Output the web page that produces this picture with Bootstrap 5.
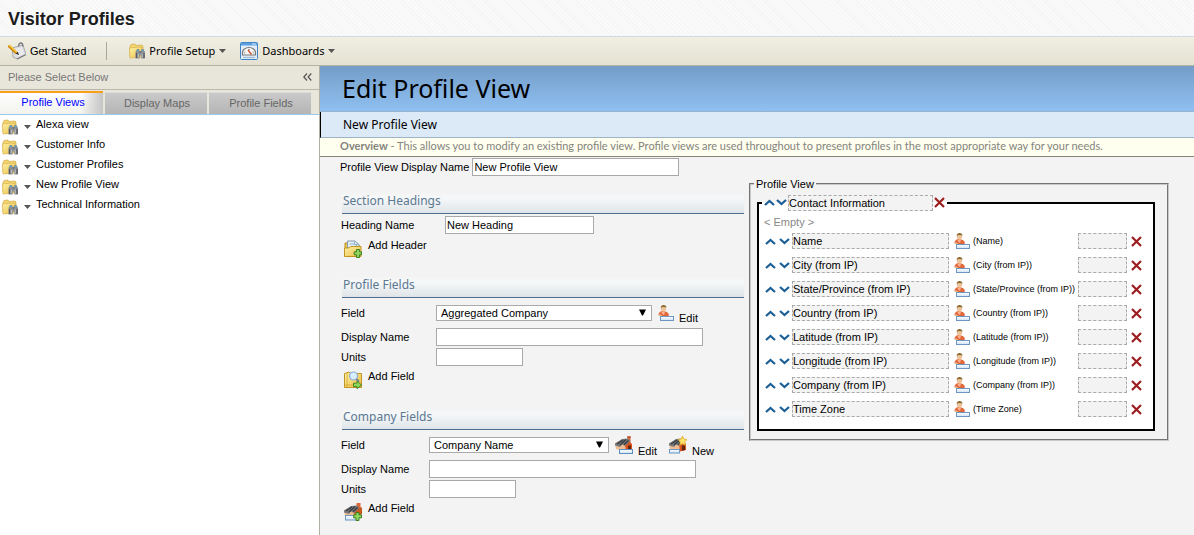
<!DOCTYPE html>
<html lang="en">
<head>
<meta charset="utf-8">
<meta name="viewport" content="width=device-width, initial-scale=1">
<title>Visitor Profiles</title>
<link rel="stylesheet" href="https://cdn.jsdelivr.net/npm/bootstrap@5.3.0/dist/css/bootstrap.min.css">
<style>
  :root { --ui: "Liberation Sans", Arial, sans-serif; --human: "Noto Sans", Tahoma, sans-serif; }
  body { font-family: var(--ui); font-size: 11px; line-height: 18px; color: #000; background: #fff; }
  svg { flex: none; display: block; }
  button { border: 0; background: none; padding: 0; color: inherit; font: inherit; }
  .hd { height: 37px; padding: 2px 8px 0; border-bottom: 1px solid #ccdbe8;
        background: repeating-linear-gradient(45deg, #f5f5f5 0 1px, #fafafa 1px 3px); }
  .hd h1 { font-size: 18px; line-height: 35px; font-weight: bold; color: #1c1c1c; margin: 0; }
  .tools { height: 29px; padding: 0 8px; border-bottom: 1px solid #b5b4a2; background: linear-gradient(#f1efe2, #e4e1d2); }
  .tools .rule { width: 1px; height: 18px; background: #aaa898; margin: 0 22px 0 20px; }
  .tools .tah { font-family: var(--human); padding-bottom: 1px; }
  .tools .tah + .tah { margin-left: 14px; }
  .side { width: 320px; border-right: 1px solid #b0afa1; background: #fff; }
  .side-top { height: 24px; padding: 0 7px 2px 8px; color: #777; background: #e8e6da; border-bottom: 1px solid #b9b7a8; }
  .tabs { height: 25px; gap: 2px; padding: 1px 0 0; background: #e8e6da; border-bottom: 1px solid #9cc8ec; }
  .tabs button { width: 102px; height: 22px; margin-top: 1px; padding: 0 0 2px 2px; color: #666; background: linear-gradient(#c9c9c9, #b5b5b5); border-top: 1px solid #dcdcdc; }
  .tabs button.on { width: 103px; height: 23px; margin: 0; padding: 0 0 4px 3px; color: #00f; border-top: 2px solid #f9a01b;
        background: linear-gradient(90deg, rgba(255,255,255,0) 78%, #c4c4c4), linear-gradient(#fff, #f2f2ee); }
  .views li { height: 20px; gap: 6px; padding-left: 2px; }
  .views li svg.fold { margin-top: 4px; }
  .views li svg.car { margin-top: 10px; }
  .views a { color: #000; text-decoration: none; margin-left: -1px; }
  .work { background: #f3f3f3; min-height: calc(100vh - 66px); }
  .banner { height: 46px; padding-left: 22px; background: linear-gradient(#749dc8, #8fc0f1); border-bottom: 1px solid #98b4d2; }
  .banner h2 { font: 25px/45px var(--human); margin: 0; color: #000; }
  .crumb { height: 26px; padding-left: 22px; font: 12px/25px var(--human); background: #dceaf8; border-left: 1px solid #000; border-bottom: 1px solid #9db3c8; }
  .note { height: 19px; padding-left: 20px; font-family: Lato, Arial, sans-serif; line-height: 15px; color: #84847c; background: #fffff0; border-bottom: 1px solid #86867c; }
  .inp, .pick { border: 1px solid #a9a9a9; background: #fff; height: 18px; padding: 0 2px 0 1px; color: #000; font: 11px/16px var(--ui); border-radius: 0; }
  .pick { appearance: none; height: 16px; padding: 0 4px; line-height: 14px;
        background: #fff url("data:image/svg+xml,%3Csvg xmlns='http://www.w3.org/2000/svg' width='7' height='7'%3E%3Cpath d='M0 .5h7L4 6.500H3z'/%3E%3C/svg%3E") no-repeat right 5px top 3px; }
  .display { padding: 1px 0 0 20px; gap: 3px; height: 35px; }
  .panes { display: grid; grid-template-columns: 404px 420px; column-gap: 5px; padding-left: 20px; align-items: start; }
  .sect h3 { height: 22px; margin: 0 0 0 2px; padding-left: 1px; font: 12px/18px var(--human); color: #5b7891;
        border-bottom: 1px solid #4d6f8f; background: linear-gradient(#f3f3f3, #f6f8f9 30%, #dfe4e8); }
  .frow { height: 20px; padding-left: 1px; }
  .frow.first { height: 22px; }
  .frow.tall { height: 29px; }
  .frow > label { width: var(--lab); flex: none; }
  .act { height: 22px; padding: 2px 0 0 4px; gap: 6px; align-items: flex-start; display: flex; }
  .act span { line-height: 14px; }
  .act svg { margin-top: 2px; }
  .s-head { --lab: 104px; min-height: 84px; }
  .s-prof { --lab: 95px; min-height: 132px; }
  .s-comp { --lab: 88px; }
  .icbtn { display: flex; align-items: flex-end; gap: 5px; margin-left: 6px; }
  .icbtn + .icbtn { margin-left: 12px; }
  .icbtn span { line-height: 14px; margin-bottom: -4px; }
  fieldset.outer { border: 2px groove #c8c8c8; padding: 0 12px 8px 6px; margin-top: -15px; }
  legend { float: none; width: auto; margin: 0; font-size: 11px; line-height: 14px; padding: 0 2px; }
  fieldset.outer > legend { margin-left: -3px; }
  fieldset.inner { border: 2px solid #000; background: #fff; padding: 0 5px 8px 6px; margin-top: 3px; }
  fieldset.inner > legend { display: flex; align-items: center; gap: 1px; padding: 0 2px; margin-left: -3px; height: 18px; }
  fieldset.inner > legend > button { margin-bottom: 2px; }
  .dash { border: 1px dashed #aaa; background: #f3f3f3; height: 16px; padding: 0; font: 11px/14px var(--ui); color: #000; border-radius: 0; }
  .empty { color: #888; line-height: 14px; margin: 3px 0 0 -1px; }
  .line { height: 24px; }
  .line button + button { margin-left: 3px; }
  .line button + .dash { margin-left: 2px; }
  .line .src { width: 108px; padding-left: 3px; font-size: 9px; white-space: nowrap; }
  .line svg.who { margin-left: 5px; }
  .w87 { width: 87px; } .w149 { width: 149px; } .w207 { width: 207px; } .w267 { width: 267px; }
  .w216 { width: 216px; } .w180 { width: 180px; } .w145 { width: 145px; } .w157 { width: 157px; } .w49 { width: 49px; }
</style>
</head>
<body>
<svg width="0" height="0" class="position-absolute" aria-hidden="true">
  <defs>
    <linearGradient id="gold" x1="0" y1="0" x2="1" y2="1"><stop offset="0" stop-color="#fff3a8"/><stop offset="1" stop-color="#e8bc40"/></linearGradient>
    <linearGradient id="sky" x1="0" y1="0" x2="0" y2="1"><stop offset="0" stop-color="#fff"/><stop offset="1" stop-color="#cfe2f5"/></linearGradient>
    <symbol id="folder" viewBox="0 0 16 16">
      <path d="M1 3.500 2 1.500 6 1l1 1.500 6-.5 1 1v10H1z" fill="#f2d56e" stroke="#d3ab45" stroke-width=".7"/>
      <path d="M.5 5 9 4l4.500.5L12 14 1 15z" fill="url(#gold)" stroke="#d8b04c" stroke-width=".7"/>
      <path d="M6.500 9 8 6h2l.7 2h1L12.500 6h2L16 9v6.500h-3.800v-3h-1.500v3H6.500z" fill="#8b8e92"/>
      <path d="M8 7.500h1.500M13 7.500h1.500" stroke="#43b0dc" stroke-width="1.200"/>
      <path d="M7.500 10v5M15 10v5M10.700 9h1.300" stroke="#55585c" stroke-width="1.200"/>
      <path d="M9.300 10.500v4M13.200 10.500v4" stroke="#c9ccd0" stroke-width=".8"/>
    </symbol>
    <symbol id="start" viewBox="0 0 18 18">
      <path d="M4 6 15 3l3 9.500L9.500 17 5 15z" fill="#dcdde0" stroke="#9a9ca1" stroke-width=".8"/>
      <path d="M6 7l8-2 2.500 7-7 3z" fill="#e9e9ed"/>
      <path d="M9 17l8.500-4.300" stroke="#777" stroke-width="1.200"/>
      <path d="M10.500 4.500 11 2q2-2 3.500 0l.5 2.500" fill="none" stroke="#77797e" stroke-width="1.300"/>
      <path d="M.5 3.500 8.500 11" stroke="#c98408" stroke-width="3"/>
      <path d="M1 3 9 10.500" stroke="#ffd24a" stroke-width="1.100"/>
      <path d="M7.700 11.800 9.800 9.800 11 13z" fill="#222"/>
    </symbol>
    <symbol id="dash" viewBox="0 0 18 18">
      <rect x=".5" y=".5" width="17" height="17" rx="1" fill="#e4eef9" stroke="#3f85c8"/>
      <path d="M1 1h16v2.500H1z" fill="#5a9fe0"/><path d="M12 2h4" stroke="#d8eaff"/>
      <path d="M2.500 13V10.500a6.500 5 0 0 1 13 0V13z" fill="#f7f7f5" stroke="#777" stroke-width="1.200"/>
      <path d="M4.500 11.500l.5-2M8 7.500h2M13 9.500l.5 2" stroke="#999" stroke-width=".9"/>
      <path d="M8 8l3.500 4.500" stroke="#d24e2e" stroke-width="1.300"/>
      <path d="M3 15.500h12" stroke="#a6bed8" stroke-width="1.400"/>
    </symbol>
    <symbol id="caret" viewBox="0 0 7 4"><path d="M0 0h7L3.500 4z" fill="#555"/></symbol>
    <symbol id="up" viewBox="0 0 11 7"><path d="M1 6 5.500 2 10 6" fill="none" stroke="#1d5f97" stroke-width="2.300"/></symbol>
    <symbol id="down" viewBox="0 0 11 7"><path d="M1 1 5.500 5 10 1" fill="none" stroke="#1d5f97" stroke-width="2.300"/></symbol>
    <symbol id="cross" viewBox="0 0 11 11"><path d="M1 1l9 9M10 1l-9 9" fill="none" stroke="#9c1f1f" stroke-width="2.200"/></symbol>
    <symbol id="person" viewBox="0 0 16 16">
      <path d="M.5 9.500Q1 6 5 6l4 1 2 2.500-.5 1.500H2z" fill="#e2673a"/>
      <path d="M3 7.500 6 10l1-3.500z" fill="#ffb897"/><path d="M0 9.500l4 1.500" stroke="#e9b48c" stroke-width="1.400"/>
      <ellipse cx="5.500" cy="3.700" rx="2.600" ry="3" fill="#ecc39a"/>
      <path d="M2.700 3.500Q2.500 0 5.500 0t2.900 3L7.500 2.200 4 2z" fill="#8c6b32"/>
      <rect x="2.500" y="11.500" width="13" height="4" fill="url(#sky)" stroke="#6d97c3"/>
    </symbol>
    <g id="house">
      <path d="M0 7 8 4l3 3v6l-3 2-7-2z" fill="#f0bd93"/>
      <path d="M10 8.500 14 5l3 3v6l-6 1.500z" fill="#d9531e"/>
      <path d="M13 9.500h3V14l-3 .7z" fill="#632510"/>
      <path d="M0 9.500V7.500L7 3l6-.5 2.500 2.500L10 10 7 8.500 5 11z" fill="#777a7d"/>
      <path d="M2 8l6-4M5 9l6-5.500M9 8.500l4.500-4" stroke="#35383b" stroke-width="1.200"/>
    </g>
    <symbol id="comp" viewBox="0 0 18 18">
      <path d="M12.500.5h3v6h-3z" fill="#dd6736"/><path d="M12 1h4" stroke="#a53c18"/><use href="#house"/>
      <rect x="4.500" y="13.500" width="13" height="4" fill="url(#sky)" stroke="#5d8ec0"/>
    </symbol>
    <symbol id="compnew" viewBox="0 0 18 18">
      <use href="#house"/>
      <path d="M13.500 0l1.400 3 3.100.5-2.200 2.400.5 3.300-2.800-1.500-2.800 1.500.5-3.300L9 3.500l3.100-.5z" fill="#ffe268" stroke="#d6a42a" stroke-width=".7"/>
      <rect x=".5" y="13.500" width="10" height="3.500" fill="url(#sky)" stroke="#6d97c3"/>
    </symbol>
    <symbol id="addhead" viewBox="0 0 18 18">
      <path d="M1 3h4l1 2h9v11.500H1z" fill="#eecb57" stroke="#b68a1e"/>
      <path d="M3.500 8V1h7.500l4 3.500V8z" fill="#e4eef7" stroke="#8198aa"/>
      <path d="M5.500 4h5l3 2.500M10.500 1.500v3h4" stroke="#8db2cf" fill="none"/>
      <path d="M.5 8h4.500l1.500-1.500h10.500v10H.5z" fill="url(#gold)" stroke="#c29421"/>
      <path d="M12.500 9.500h3v2.300h2v3h-2v2.700h-3v-2.700h-2.300v-3h2.300z" fill="#8ed75c" stroke="#3c7e22"/>
    </symbol>
    <symbol id="addprof" viewBox="0 0 18 18">
      <path d="M.5 2.500 5 1l1.500 1.500h11v14H.5z" fill="url(#gold)" stroke="#c29421"/>
      <path d="M1 14h9M3 2v14" stroke="#d5a62d" stroke-width=".8"/>
      <circle cx="9.500" cy="5" r="4" fill="#d9efff" stroke="#8caed0" stroke-width="1.200"/>
      <path d="M12.300 8 15 10.500" stroke="#7b8791" stroke-width="2"/>
      <path d="M9.500 12.200h3.500V10l4.500 4-4.500 3.800v-2.200H9.500z" fill="#8ed75c" stroke="#3c7e22" stroke-width=".9"/>
    </symbol>
    <symbol id="addcomp" viewBox="0 0 18 18">
      <path d="M12.500 0h4v6h-4z" fill="#dd6736"/><use href="#house"/><path d="M12 8l5-4 1 1v6h-6z" fill="#c9581f"/>
      <rect x="1.500" y="12.500" width="11" height="4.500" fill="url(#sky)" stroke="#6d97c3"/>
      <path d="M12 9.500h3v2.300h2.500v3H15v2.700h-3v-2.700H9.700v-3H12z" fill="#8ed75c" stroke="#3c7e22"/>
    </symbol>
  </defs>
</svg>

<header class="hd"><h1>Visitor Profiles</h1></header>

<nav class="tools d-flex align-items-center" aria-label="Main">
  <button class="d-flex align-items-center gap-1"><svg width="18" height="18"><use href="#start"/></svg><span>Get Started</span></button>
  <span class="rule"></span>
  <button class="tah d-flex align-items-center gap-1"><svg width="16" height="16"><use href="#folder"/></svg><span>Profile Setup</span><svg width="7" height="4"><use href="#caret"/></svg></button>
  <button class="tah d-flex align-items-center gap-1"><svg width="18" height="18"><use href="#dash"/></svg><span>Dashboards</span><svg width="7" height="4"><use href="#caret"/></svg></button>
</nav>

<div class="d-flex">
  <aside class="side flex-shrink-0">
    <div class="side-top d-flex align-items-center justify-content-between">
      <span>Please Select Below</span>
      <button aria-label="Collapse"><svg width="9" height="8" viewBox="0 0 9 8"><path d="M4 .5.8 4 4 7.500M8.300.5 5.100 4l3.200 3.500" fill="none" stroke="#555" stroke-width="1.200"/></svg></button>
    </div>
    <div class="tabs d-flex" role="tablist">
      <button class="on" role="tab" aria-selected="true">Profile Views</button>
      <button role="tab" aria-selected="false">Display Maps</button>
      <button role="tab" aria-selected="false">Profile Fields</button>
    </div>
    <ul class="views list-unstyled m-0" id="views"></ul>
  </aside>

  <main class="work flex-grow-1">
    <div class="banner"><h2>Edit Profile View</h2></div>
    <div class="crumb">New Profile View</div>
    <div class="note"><b>Overview</b> - This allows you to modify an existing profile view. Profile views are used throughout to present profiles in the most appropriate way for your needs.</div>
    <div class="display d-flex align-items-start">
      <label for="pv">Profile View Display Name</label><input id="pv" class="inp w207" value="New Profile View">
    </div>
    <div class="panes">
      <div>
        <section class="sect s-head">
          <h3>Section Headings</h3>
          <div class="frow first d-flex align-items-center"><label for="hn">Heading Name</label><input id="hn" class="inp w149" value="New Heading"></div>
          <button class="act"><svg width="18" height="18"><use href="#addhead"/></svg><span>Add Header</span></button>
        </section>
        <section class="sect s-prof">
          <h3>Profile Fields</h3>
          <div class="frow tall d-flex align-items-center"><label for="pf">Field</label><select id="pf" class="pick w216"><option>Aggregated Company</option></select>
            <button class="icbtn"><svg width="16" height="16"><use href="#person"/></svg><span>Edit</span></button></div>
          <div class="frow d-flex align-items-center"><label for="pd">Display Name</label><input id="pd" class="inp w267"></div>
          <div class="frow d-flex align-items-center"><label for="pu">Units</label><input id="pu" class="inp w87"></div>
          <button class="act"><svg width="18" height="18"><use href="#addprof"/></svg><span>Add Field</span></button>
        </section>
        <section class="sect s-comp">
          <h3>Company Fields</h3>
          <div class="frow tall d-flex align-items-center"><label for="cf">Field</label><select id="cf" class="pick w180"><option>Company Name</option></select>
            <button class="icbtn"><svg width="18" height="18"><use href="#comp"/></svg><span>Edit</span></button>
            <button class="icbtn"><svg width="18" height="18"><use href="#compnew"/></svg><span>New</span></button></div>
          <div class="frow d-flex align-items-center"><label for="cd">Display Name</label><input id="cd" class="inp w267"></div>
          <div class="frow d-flex align-items-center"><label for="cu">Units</label><input id="cu" class="inp w87"></div>
          <button class="act"><svg width="18" height="18"><use href="#addcomp"/></svg><span>Add Field</span></button>
        </section>
      </div>

      <fieldset class="outer">
        <legend>Profile View</legend>
        <fieldset class="inner">
          <legend>
            <button aria-label="Move up"><svg width="11" height="7"><use href="#up"/></svg></button>
            <button aria-label="Move down"><svg width="11" height="7"><use href="#down"/></svg></button>
            <input class="dash w145" value="Contact Information" aria-label="Heading">
            <button aria-label="Remove"><svg width="11" height="11"><use href="#cross"/></svg></button>
          </legend>
          <div class="empty">&lt; Empty &gt;</div>
          <div id="lines"></div>
        </fieldset>
      </fieldset>
    </div>
  </main>
</div>

<script>
  document.getElementById('views').innerHTML =
    ['Alexa view', 'Customer Info', 'Customer Profiles', 'New Profile View', 'Technical Information'].map(v =>
      `<li class="d-flex align-items-start"><svg class="fold" width="16" height="16"><use href="#folder"/></svg><svg class="car" width="7" height="4"><use href="#caret"/></svg><a href="#">${v}</a></li>`).join('');
  document.getElementById('lines').innerHTML =
    ['Name', 'City (from IP)', 'State/Province (from IP)', 'Country (from IP)', 'Latitude (from IP)', 'Longitude (from IP)', 'Company (from IP)', 'Time Zone'].map(n =>
      `<div class="line d-flex align-items-center">
        <button aria-label="Move up"><svg width="11" height="7"><use href="#up"/></svg></button>
        <button aria-label="Move down"><svg width="11" height="7"><use href="#down"/></svg></button>
        <input class="dash w157" value="${n}" aria-label="Display name">
        <svg class="who" width="16" height="16"><use href="#person"/></svg><span class="src">(${n})</span>
        <input class="dash w49" aria-label="Units of ${n}">
        <button class="ms-1" aria-label="Remove"><svg width="11" height="11"><use href="#cross"/></svg></button>
      </div>`).join('');
</script>
<script src="https://cdn.jsdelivr.net/npm/bootstrap@5.3.0/dist/js/bootstrap.bundle.min.js"></script>
</body>
</html>
